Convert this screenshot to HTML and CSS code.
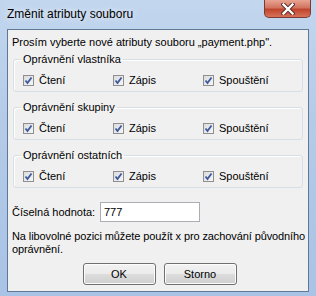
FILE: index.html
```html
<!DOCTYPE html>
<html lang="cs">
<head>
    <meta charset="UTF-8">
    <title>Změnit atributy souboru</title>
    <link rel="stylesheet" href="styles.css">
</head>
<body>

<div class="window">
    <div class="titlebar">
        <span class="title">Změnit atributy souboru</span>
        <button class="close-btn" aria-label="Zavřít">
            <svg width="14" height="12" viewBox="0 0 14 12">
                <path d="M2.5 1.5 L11.5 10.5 M11.5 1.5 L2.5 10.5" stroke="#5a2a24" stroke-width="4.2" stroke-linecap="square"/>
                <path d="M2.5 1.5 L11.5 10.5 M11.5 1.5 L2.5 10.5" stroke="#ffffff" stroke-width="2.4" stroke-linecap="square"/>
            </svg>
        </button>
    </div>

    <div class="client">
        <p class="intro">Prosím vyberte nové atributy souboru „payment.php".</p>

        <fieldset class="group">
            <legend>Oprávnění vlastníka</legend>
            <label class="check"><span class="box"></span>Čtení</label>
            <label class="check"><span class="box"></span>Zápis</label>
            <label class="check"><span class="box"></span>Spouštění</label>
        </fieldset>

        <fieldset class="group">
            <legend>Oprávnění skupiny</legend>
            <label class="check"><span class="box"></span>Čtení</label>
            <label class="check"><span class="box"></span>Zápis</label>
            <label class="check"><span class="box"></span>Spouštění</label>
        </fieldset>

        <fieldset class="group">
            <legend>Oprávnění ostatních</legend>
            <label class="check"><span class="box"></span>Čtení</label>
            <label class="check"><span class="box"></span>Zápis</label>
            <label class="check"><span class="box"></span>Spouštění</label>
        </fieldset>

        <div class="numeric">
            <label for="value">Číselná hodnota:</label>
            <input type="text" id="value" value="777">
        </div>

        <p class="hint">Na libovolné pozici můžete použít x pro zachování původního oprávnění.</p>

        <div class="buttons">
            <button class="btn">OK</button>
            <button class="btn">Storno</button>
        </div>
    </div>
</div>

<script>
    // zaškrtnutí: vložit SVG do všech políček
    document.querySelectorAll(".box").forEach((box) => {
        box.innerHTML = '<svg width="9" height="9" viewBox="0 0 9 9"><path d="M1.5 4.5 L3.5 7 L7.5 1.5" fill="none" stroke="#3e58a0" stroke-width="1.8"/></svg>';
    });
</script>

</body>
</html>
```

FILE: styles.css
```css
body {
    margin: 0;
    padding: 0;
    font-family: "Liberation Sans", Arial, sans-serif;
    font-size: 11px;
    color: #000;
}

.window {
    width: 316px;
    height: 296px;
    box-sizing: border-box;
    background: linear-gradient(to bottom, #c2d6ee 0%, #b4cbe8 40%, #a9c3e6 100%);
    display: flex;
    flex-direction: column;
    padding: 0 7px 4px 7px;
}

.titlebar {
    height: 29px;
    display: flex;
    justify-content: space-between;
    align-items: flex-start;
}

.title {
    margin-top: 7px;
    font-size: 12px;
    color: #000;
    text-shadow: 0 0 6px #fff;
}

.close-btn {
    width: 47px;
    height: 18px;
    margin-right: -2px;
    border: 1px solid #7b3a33;
    border-top: none;
    border-radius: 0 0 5px 5px;
    background: linear-gradient(to bottom, #e8a493 0%, #d27460 45%, #c0442c 55%, #d8725a 100%);
    display: flex;
    align-items: center;
    justify-content: center;
    padding: 0;
}

.client {
    flex: 1;
    background: #f0f0f0;
    border: 1px solid #5f7896;
    padding: 5px 1px 0 4px;
    display: flex;
    flex-direction: column;
}

.intro {
    margin: 1px 0 5px 0;
}

.group {
    margin: 0 4px 9px 1px;
    padding: 9px 0 5px 9px;
    border: 1px solid #d5dfe5;
    border-radius: 3px;
    box-shadow: inset 1px 1px 0 #fff;
    display: flex;
}

.group legend {
    padding: 0 2px;
    margin-left: -2px;
}

.check {
    display: flex;
    align-items: center;
    gap: 5px;
    width: 90px;
}

.box {
    width: 9px;
    height: 9px;
    border: 1px solid #8f8f8f;
    background: linear-gradient(135deg, #dcdcdc 0%, #f6f6f6 100%);
    display: flex;
    align-items: center;
    justify-content: center;
}

.box svg {
    margin: -1px;
}

.numeric {
    display: flex;
    align-items: center;
    margin-top: 5px;
}

.numeric label {
    width: 88px;
    white-space: nowrap;
}

.numeric input {
    width: 100px;
    height: 20px;
    box-sizing: border-box;
    padding: 0 3px;
    border: 1px solid #abadb3;
    font: inherit;
    background: #fff;
}

.hint {
    margin: 8px 0 0 0;
    line-height: 13px;
    letter-spacing: -0.1px;
}

.buttons {
    display: flex;
    justify-content: center;
    gap: 8px;
    margin-top: 7px;
}

.btn {
    width: 73px;
    height: 22px;
    border: 1px solid #707070;
    border-radius: 3px;
    background: linear-gradient(to bottom, #f2f2f2 0%, #ebebeb 50%, #dddddd 50%, #cfcfcf 100%);
    box-shadow: inset 0 0 0 1px #fcfcfc;
    font: inherit;
    color: #000;
}
```
